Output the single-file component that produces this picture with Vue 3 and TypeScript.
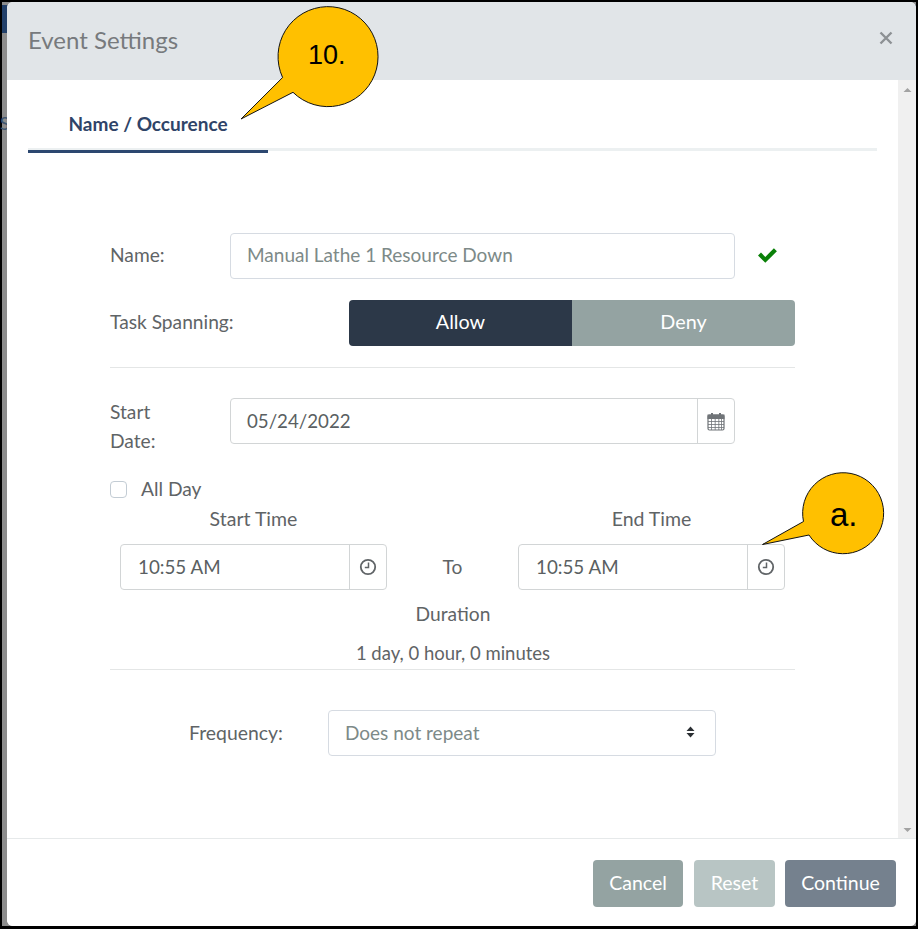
<script setup lang="ts">
const title = 'Event Settings'
</script>

<template>
  <div class="frame">
    <span class="behind-s">S</span>
    <div class="modal">
      <header class="head">
        <h1>{{ title }}</h1>
        <svg class="close" width="14" height="14" viewBox="0 0 14 14"><path d="M1.5 1.5l11 11M12.5 1.5l-11 11" stroke="#8d9194" stroke-width="2.4" fill="none"/></svg>
      </header>

      <div class="scroller">
        <main class="content">
          <nav class="tabs"><div class="tab">Name / Occurence</div></nav>

          <section class="form">
            <div class="row name-row">
              <label class="lbl">Name:</label>
              <div class="field placeholder grow">Manual Lathe 1 Resource Down</div>
              <svg class="check" width="21" height="16" viewBox="0 0 21 16"><path d="M1 8.6l3-3 4.3 4.3L16.900 1.300l3 3L8.300 15.800z" fill="#0a8008"/></svg>
            </div>

            <div class="row span-row">
              <label class="lbl">Task Spanning:</label>
              <div class="toggle">
                <div class="opt on">Allow</div>
                <div class="opt off">Deny</div>
              </div>
            </div>

            <hr class="rule first" />

            <div class="row date-row">
              <label class="lbl date-lbl">Start Date:</label>
              <div class="group grow">
                <div class="val date">05/24/2022</div>
                <div class="addon">
                  <svg width="18" height="19" viewBox="0 0 18 19" fill="none" stroke="#707478">
                    <rect x="1" y="3" width="16" height="15" rx="1.500" stroke-width="1.200"/>
                    <rect x="1" y="3" width="16" height="3.500" fill="#707478"/>
                    <path d="M1 9.500h16M1 12.500h16M1 15.500h16M4.500 7v11M8.200 7v11M11.800 7v11M14.500 7v11" stroke-width=".8"/>
                    <path d="M5 1v3.500M13 1v3.500" stroke-width="2"/>
                  </svg>
                </div>
              </div>
            </div>

            <div class="allday">
              <span class="box"></span>
              <span>All Day</span>
            </div>

            <div class="times">
              <div class="time-col">
                <div class="cap">Start Time</div>
                <div class="group">
                  <div class="val t">10:55 AM</div>
                  <div class="addon clock">
                    <svg width="18" height="18" viewBox="0 0 18 18" fill="none" stroke="#606467"><circle cx="9" cy="9" r="7.200" stroke-width="1.800"/><path d="M9.500 4.500v5H5.800" stroke-width="1.500"/></svg>
                  </div>
                </div>
              </div>
              <div class="to">To</div>
              <div class="time-col">
                <div class="cap">End Time</div>
                <div class="group">
                  <div class="val t">10:55 AM</div>
                  <div class="addon clock">
                    <svg width="18" height="18" viewBox="0 0 18 18" fill="none" stroke="#606467"><circle cx="9" cy="9" r="7.200" stroke-width="1.800"/><path d="M9.500 4.500v5H5.800" stroke-width="1.500"/></svg>
                  </div>
                </div>
              </div>
            </div>

            <div class="center dur">Duration</div>
            <div class="center span">1 day, 0 hour, 0 minutes</div>
            <hr class="rule second" />

            <div class="freq">
              <label class="freq-lbl">Frequency:</label>
              <div class="field placeholder select">
                <span>Does not repeat</span>
                <svg width="9" height="12" viewBox="0 0 9 12"><path d="M4.500 0.500L8.500 5H.5zM4.500 11.500L.5 7h8z" fill="#2b2f33"/></svg>
              </div>
            </div>
          </section>
        </main>

        <aside class="sbar">
          <svg width="9" height="6" viewBox="0 0 9 6"><path d="M4.500 1L8.500 5H.5z" fill="#a3a3a3"/></svg>
          <svg width="9" height="6" viewBox="0 0 9 6"><path d="M4.500 5L.5 1h8z" fill="#a3a3a3"/></svg>
        </aside>
      </div>

      <footer class="foot">
        <button class="btn cancel">Cancel</button>
        <button class="btn reset">Reset</button>
        <button class="btn go">Continue</button>
      </footer>
    </div>

    <div class="callout c10">
      <svg width="140" height="120" viewBox="0 0 140 120"><path d="M42.600 72.500A50 50 0 1 1 53 87.300L1 114z" fill="#ffc000" stroke="#111" stroke-width="1"/></svg>
      <span class="num n10">10.</span>
    </div>
    <div class="callout ca">
      <svg width="125" height="86" viewBox="0 0 125 86"><path d="M42.500 49.500A40.500 40.500 0 1 1 48 63L1.500 72.500z" fill="#ffc000" stroke="#111" stroke-width="1"/></svg>
      <span class="num na">a.</span>
    </div>
  </div>
</template>

<style>
html, body { margin: 0; background: #000; }
</style>

<style scoped>
.frame {
  position: relative;
  box-sizing: border-box;
  width: 918px;
  height: 929px;
  padding: 2px 2px 3px 7px;
  overflow: hidden;
  background: linear-gradient(#8c8c8c 0 5px, #22406a 5px 33px, #8c8c8c 33px);
  box-shadow: inset 2px 0 0 #000, inset 0 2px 0 #000, inset -2px 0 0 #000, inset 0 -3px 0 #000;
  font-family: Lato, "Open Sans", sans-serif;
  font-size: 19.200px;
  color: #5f6466;
}
.behind-s {
  position: absolute;
  left: 0;
  top: 113px;
  color: #40566f;
  font-size: 17px;
}
.modal {
  position: relative;
  height: 100%;
  display: flex;
  flex-direction: column;
  background: #fff;
  border-radius: 6px;
  overflow: hidden;
  padding-left: 1px;
}
.head {
  height: 78px;
  margin-left: -1px;
  padding: 0 23px 3px 21px;
  box-sizing: border-box;
  flex: none;
  display: flex;
  align-items: center;
  justify-content: space-between;
  background: #e1e5e8;
}
h1 {
  margin: 0;
  font-weight: 400;
  font-size: 24px;
  color: #777a7d;
}
.close {
  margin-bottom: 3px;
}
.scroller {
  flex: 1;
  min-height: 0;
  display: flex;
}
.content {
  flex: 1;
  padding: 0 21px 0 20px;
}
.sbar {
  width: 18px;
  flex: none;
  background: #f0f0f0;
  display: flex;
  flex-direction: column;
  justify-content: space-between;
  align-items: center;
  padding: 7px 0 5px;
  box-sizing: border-box;
}
.tabs {
  height: 71px;
  box-sizing: border-box;
  border-bottom: 3px solid #ecf0f1;
}
.tab {
  width: 240px;
  height: 73px;
  box-sizing: border-box;
  padding-top: 31px;
  text-align: center;
  font-weight: 700;
  font-size: 19px;
  color: #2f4468;
  line-height: 26px;
  border-bottom: 3px solid #2c4770;
}
.form {
  width: 685px;
  margin-left: 82px;
  padding-top: 82px;
}
.row {
  display: flex;
  align-items: center;
}
.lbl {
  width: 120px;
  flex: none;
  position: relative;
  top: -2px;
  white-space: nowrap;
}
.grow {
  width: 505px;
  flex: none;
}
.field {
  box-sizing: border-box;
  height: 46px;
  line-height: 41px;
  padding: 0 16px;
  background: #fff;
  border: 1.500px solid #d6dbe2;
  border-radius: 4px;
  font-size: 19px;
}
.placeholder {
  color: #7d8a88;
}
.check {
  margin-left: 22px;
  margin-bottom: 2px;
}
.span-row {
  margin-top: 21px;
  height: 46px;
}
.toggle {
  margin-left: 119px;
  width: 446px;
  height: 46px;
  display: flex;
  border-radius: 4px;
  overflow: hidden;
  color: #fff;
  font-size: 19.800px;
}
.opt {
  flex: 1;
  text-align: center;
  line-height: 43px;
}
.on {
  background: #2c3848;
}
.off {
  background: #94a3a2;
}
.rule {
  border: 0;
  height: 1px;
  margin: 0;
  background: #e4e6e6;
}
.rule.first {
  margin-top: 21px;
}
.date-row {
  margin-top: 30px;
  align-items: flex-start;
}
.date-lbl {
  width: 70px;
  margin-right: 50px;
  line-height: 29px;
  white-space: normal;
  top: -1px;
}
.group {
  box-sizing: border-box;
  height: 46px;
  display: flex;
  border: 1.500px solid #d2d5d6;
  border-radius: 4px;
  color: #5a5f62;
}
.val {
  flex: 1;
  line-height: 43px;
  padding-left: 16px;
}
.val.date {
  font-size: 18.700px;
  line-height: 45px;
}
.val.t {
  padding-left: 17px;
  font-size: 18.800px;
}
.addon {
  width: 36px;
  flex: none;
  display: flex;
  align-items: center;
  justify-content: center;
  border-left: 1.500px solid #d2d5d6;
}
.allday {
  margin-top: 21px;
  height: 24px;
  display: flex;
  align-items: center;
  gap: 14px;
  line-height: 24px;
}
.box {
  box-sizing: border-box;
  width: 17px;
  height: 17px;
  border: 1.500px solid #c3ccd4;
  border-radius: 4px;
}
.times {
  display: flex;
  padding: 0 10px;
  justify-content: space-between;
}
.time-col {
  width: 267px;
}
.cap {
  height: 43px;
  padding-top: 5px;
  box-sizing: border-box;
  line-height: 26px;
  text-align: center;
  font-size: 19.500px;
}
.to {
  margin-top: 53px;
  line-height: 26px;
}
.center {
  text-align: center;
  width: 686px;
}
.dur {
  margin-top: 11px;
  line-height: 26px;
}
.span {
  margin-top: 13px;
  line-height: 26px;
  font-size: 18.500px;
}
.rule.second {
  margin-top: 3px;
}
.freq {
  margin-top: 40px;
  display: flex;
  align-items: center;
}
.freq-lbl {
  width: 139px;
  margin-left: 79px;
  flex: none;
  font-size: 19.400px;
  position: relative;
  top: -1px;
}
.select {
  width: 388px;
  display: flex;
  align-items: center;
  justify-content: space-between;
  padding-right: 20px;
  padding-bottom: 2px;
}
.foot {
  flex: none;
  height: 88px;
  box-sizing: border-box;
  margin-left: -1px;
  border-top: 1.500px solid #e6e9ea;
  padding: 21px 20px 0 0;
  display: flex;
  justify-content: flex-end;
  gap: 11px;
  background: #fff;
}
.btn {
  height: 47px;
  border: 0;
  border-radius: 4px;
  padding: 0 0 3px;
  font: inherit;
  font-size: 19.500px;
  color: #fff;
}
.cancel { width: 90px; background: #94a3a2; }
.reset { width: 81px; background: #b8c5c4; margin-right: -1px; }
.go { width: 111px; background: #75818e; }
.callout {
  position: absolute;
}
.callout svg {
  display: block;
}
.c10 {
  left: 240px;
  top: 5px;
}
.ca {
  left: 761px;
  top: 472px;
}
.num {
  position: absolute;
  font-family: "Liberation Sans", Arial, sans-serif;
  font-size: 27px;
  color: #000;
  line-height: 32px;
}
.n10 {
  left: 68px;
  top: 34px;
}
.na {
  left: 69px;
  top: 25px;
  font-size: 33px;
  line-height: 36px;
}
</style>
